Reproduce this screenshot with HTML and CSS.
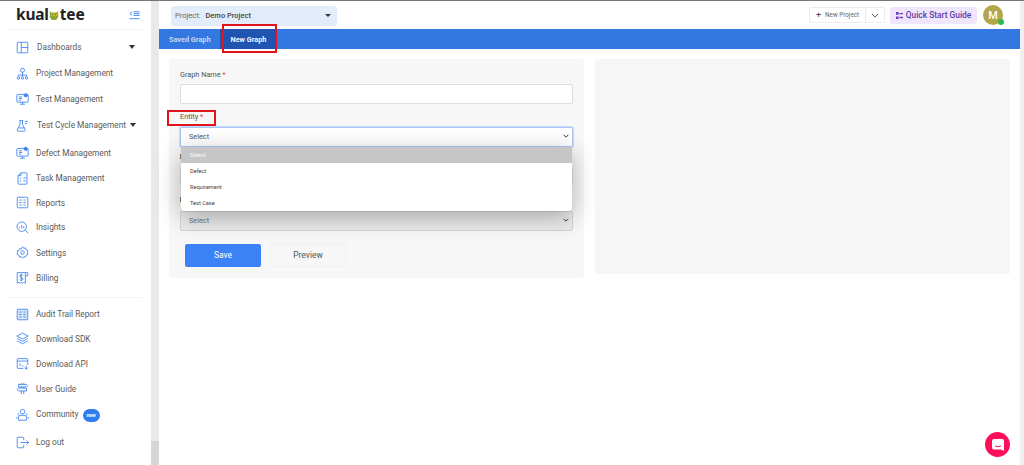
FILE: index.html
```html
<!DOCTYPE html>
<html lang="en">
<head>
<meta charset="utf-8">
<title>New Graph</title>
<link rel="stylesheet" href="styles.css">
</head>
<body>
<div class="app">
  <aside class="sidebar">
    <div class="brand">
      <div class="logo">kual<svg class="owl" viewBox="0 0 12 12" width="10" height="11"><path d="M1 1l2 1.500h6L11 1v7l-2.500 3.500h-5L1 8z" fill="#8fa32c"/><circle cx="4" cy="5" r="1.800" fill="#e9c92f"/><circle cx="8" cy="5" r="1.800" fill="#e9c92f"/><circle cx="4" cy="5" r=".7" fill="#333"/><circle cx="8" cy="5" r=".7" fill="#333"/></svg>tee</div>
      <svg class="collapse" viewBox="0 0 12 10" width="11" height="10"><path d="M3.500 1.500L1 3.500l2.500 2M5 1.500h6.500M5 3.500h6.500M5 5.500h6.500M.5 9h11" fill="none" stroke="#3d84f0" stroke-width="1"/></svg>
    </div>
    <nav class="nav nav-main">
      <a class="item item-dash"><svg class="ico" viewBox="0 0 16 16"><rect x="1.500" y="1.500" width="13" height="13" rx="1"/><path d="M6.500 1.500v13M6.500 8h8"/></svg>Dashboards<span class="caret caret-far"></span></a>
      <a class="item item-pm"><svg class="ico" viewBox="0 0 16 16"><circle cx="8" cy="4" r="2.500"/><path d="M8 6.500V10M3 12v-2h10v2M8 10v2"/><circle cx="3" cy="13.500" r="1.500"/><circle cx="8" cy="13.500" r="1.500"/><circle cx="13" cy="13.500" r="1.500"/></svg>Project Management</a>
      <a class="item item-tm"><svg class="ico" viewBox="0 0 16 16"><rect x="1" y="3" width="14" height="9.500" rx="1"/><path d="M8 12.500V15M5 15h6M3.500 6h4M3.500 8h4M3.500 10h3"/><circle cx="12" cy="4" r="2" fill="#3d84f0"/></svg>Test Management</a>
      <a class="item item-tc"><svg class="ico" viewBox="0 0 16 16"><path d="M4 2h5M5 2v5l-3.500 6.500q-.5 1.500 1 1.500h8q1.500 0 1-1.500L8 7V2M3.500 11h7M11 3h3.500M11 5.500h2.500"/></svg>Test Cycle Management<span class="caret caret-near"></span></a>
      <a class="item item-dm"><svg class="ico" viewBox="0 0 16 16"><rect x="1" y="3" width="14" height="9.500" rx="1"/><path d="M8 12.500V15M5 15h6M3.500 6h4M3.500 8h4M3.500 10h3"/><circle cx="12" cy="3.500" r="2" fill="#3d84f0"/></svg>Defect Management</a>
      <a class="item item-task"><svg class="ico" viewBox="0 0 16 16"><path d="M6 1h6.500a1 1 0 011 1v12a1 1 0 01-1 1h-9a1 1 0 01-1-1V4.500zM6 1v3.500H2.500M9 7.500h3M9 11h3"/><path d="M4.500 7.500h2M4.500 11h2"/></svg>Task Management</a>
      <a class="item item-rep"><svg class="ico" viewBox="0 0 16 16"><rect x="1.500" y="1.500" width="13" height="13" rx="1"/><path d="M4 5h3M9 5h3M4 8h3M9 8h3M4 11h3M9 11h3"/></svg>Reports</a>
      <a class="item item-ins"><svg class="ico" viewBox="0 0 16 16"><circle cx="7" cy="7" r="5.800"/><path d="M11.500 11.500L15 15M4.500 9V7.500M7 9V5M9.500 9V6.500"/></svg>Insights</a>
      <a class="item item-set"><svg class="ico" viewBox="0 0 16 16"><path d="M8 1l1.500 1.800 2.300-.4.700 2.200 2.200 1-.7 2.400.7 2.400-2.200 1-.7 2.200-2.300-.4L8 15l-1.500-1.800-2.300.4-.7-2.200-2.200-1 .7-2.400L1.300 6l2.200-.4.700-2.200 2.300.4z"/><circle cx="8" cy="8" r="2.200"/></svg>Settings</a>
      <a class="item item-bill"><svg class="ico" viewBox="0 0 16 16"><path d="M1.500 2h10v13l-2-1-1.500 1-1.500-1-1.500 1-1.500-1-2 1zM11.500 2h3v4h-3M8.500 5.500Q8 4.500 6.500 4.500 4.500 4.500 4.800 6.200T6.500 8q1.900.3 1.900 1.900T6.500 11.500q-1.500 0-2-1M6.500 3.500v9"/></svg>Billing</a>
    </nav>
    <nav class="nav nav-foot">
      <a class="item item-aud"><svg class="ico" viewBox="0 0 16 16"><rect x="1.500" y="1.500" width="13" height="13" rx="1" fill="#dbe8fc"/><path d="M4 5h3M9 5h3M4 8h3M9 8h3M4 11h3M9 11h3"/></svg>Audit Trail Report</a>
      <a class="item item-sdk"><svg class="ico" viewBox="0 0 16 16"><path d="M8 1.500L15 5l-7 3.500L1 5zM1.500 8L8 11.500 14.500 8M1.500 11L8 14.500 14.500 11"/></svg>Download SDK</a>
      <a class="item item-api"><svg class="ico" viewBox="0 0 16 16"><path d="M9 14H2.500a1 1 0 01-1-1V3a1 1 0 011-1h11a1 1 0 011 1v7M1.500 5h13M4 8l2 1.500L4 11M7 11h2M12.500 10.500V15M10.500 13l2 2 2-2"/></svg>Download API</a>
      <a class="item item-guide"><svg class="ico" viewBox="0 0 16 16"><path d="M3 3h10l1.500 1.500L13 6H3zM3 7.500h10v3.500H3L1.500 9.200zM6.500 1v2M9.500 1v2M6.500 6v1.500M9.500 6v1.500M6.500 11v4M9.500 11v4"/></svg>User Guide</a>
      <a class="item item-com"><svg class="ico" viewBox="0 0 16 16"><circle cx="8" cy="4.500" r="2.800"/><path d="M3 15v-3q0-3 3-3h4q3 0 3 3v3zM3.500 6.500a2 2 0 000 3M12.500 6.500a2 2 0 010 3M1 13v-2M15 13v-2"/></svg>Community<span class="badge">new</span></a>
      <a class="item item-out"><svg class="ico" viewBox="0 0 16 16"><path d="M9.500 5V2.500a1 1 0 00-1-1h-6a1 1 0 00-1 1v11a1 1 0 001 1h6a1 1 0 001-1V11M5.500 8h10M13 5.500L15.500 8 13 10.500"/></svg>Log out</a>
    </nav>
  </aside>
  <div class="rail"><span class="rail-thumb"></span></div>
  <main class="main">
    <header class="topbar">
      <div class="project"><span class="project-key">Project:</span><span class="project-name">Demo Project</span><span class="caret caret-small"></span></div>
      <div class="top-actions">
        <div class="split"><span class="split-main"><span class="plus">+</span>New Project</span><span class="split-arrow"><svg viewBox="0 0 10 6" width="8" height="5"><path d="M1 1l4 4 4-4" fill="none" stroke="#555" stroke-width="1.200"/></svg></span></div>
        <div class="guide"><svg viewBox="0 0 8 8" width="7" height="7"><path d="M0 0h3v3H0zM0 5h3v3H0zM4 1h4v1.500H4zM4 5.500h4V7H4z" fill="#6b3fb5"/></svg>Quick Start Guide</div>
        <div class="avatar">M<span class="status"></span></div>
      </div>
    </header>
    <div class="tabs">
      <span class="tab">Saved Graph</span>
      <span class="tab tab-active">New Graph</span>
    </div>
    <section class="content">
      <form class="card card-form">
        <label class="label">Graph Name <em>*</em></label>
        <div class="control control-name"></div>
        <label class="label label-entity">Entity <em>*</em></label>
        <div class="control control-focus">Select<svg class="chev" viewBox="0 0 10 6"><path d="M1 1l4 4 4-4" fill="none" stroke="#333" stroke-width="1.600"/></svg></div>
        <span class="label-stub label-hidden"></span>
        <div class="control control-hidden"></div>
        <span class="label-stub label-hidden2"></span>
        <div class="control control-last">Select<svg class="chev" viewBox="0 0 10 6"><path d="M1 1l4 4 4-4" fill="none" stroke="#333" stroke-width="1.600"/></svg></div>
        <div class="buttons">
          <span class="btn btn-save">Save</span>
          <span class="btn btn-preview">Preview</span>
        </div>
      </form>
      <div class="card card-side"></div>
    </section>
  </main>
  <div class="rail-right"></div>
</div>
<div class="menu">
  <div class="opt opt-on">Select</div>
  <div class="opt">Defect</div>
  <div class="opt">Requirement</div>
  <div class="opt">Test Case</div>
</div>
<span class="mark mark-tab"></span>
<span class="mark mark-entity"></span>
<span class="chat"><svg viewBox="0 0 12 12" width="12" height="12"><path d="M2 0h8a2 2 0 012 2v10l-3-1.500H2a2 2 0 01-2-2V2a2 2 0 012-2z" fill="#fff"/><path d="M3 7q3 1.500 6 0" fill="none" stroke="#ff0f5a"/></svg></span>
</body>
</html>
```
FILE: styles.css
```css
* { box-sizing: border-box; }
html, body { margin: 0; height: 465px; overflow: hidden; }
body { font-family: Roboto, "Liberation Sans", sans-serif; color: #555; background: #fff; position: relative; }
.app { display: flex; height: 465px; border-top: 1px solid #777; }

.sidebar { width: 151px; flex: none; padding: 0 8px; background: #fff; }
.brand { height: 29px; display: flex; align-items: center; justify-content: space-between; padding: 0 3px 0 8px; border-bottom: 1px solid #f3f3f3; }
.logo { font: 700 15.500px/1 "Noto Sans", sans-serif; color: #222; display: flex; align-items: center; letter-spacing: -.2px; }
.owl { margin: 0 .5px; }
.nav { display: flex; flex-direction: column; }
.nav-main { border-bottom: 1px solid #f3f3f3; padding-bottom: 7px; }
.item { display: flex; align-items: center; font-size: 8.300px; line-height: 12px; color: #5a5a5a; height: 25px; white-space: nowrap; position: relative; padding-left: 8px; }
.ico { width: 13px; height: 13px; margin-right: 7px; flex: none; fill: none; stroke: #2f7bf0; stroke-width: 1; }
.item-dash { margin-top: 5px; height: 24px; }
.item-dash .ico { margin-right: 8px; }
.item-pm { height: 28px; }
.item-tm { height: 23px; }
.item-tc { height: 30px; }
.item-tc .ico { margin-right: 8px; }
.item-dm { height: 25px; }
.item-task { height: 26px; }
.item-rep { height: 23px; }
.item-ins { height: 26px; }
.item-set, .item-bill { height: 25px; }
.nav-foot { padding-top: 4px; }
.item-aud { height: 24px; }
.item-com { height: 26px; }
.item-out { height: 30px; }
.caret { display: inline-block; width: 0; height: 0; border-left: 3.500px solid transparent; border-right: 3.500px solid transparent; border-top: 4px solid #333; flex: none; }
.caret-far { margin-left: 48px; }
.caret-near { margin-left: 4px; }
.caret-small { border-left-width: 3px; border-right-width: 3px; border-top-width: 3px; }
.badge { display: inline-block; width: 17px; height: 13px; border-radius: 8px; background: #2f7bf0; color: #fff; font-size: 5px; font-weight: 700; line-height: 13px; text-align: center; margin-left: 4px; margin-top: 2px; }

.rail { width: 8px; flex: none; background: #e9e9e9; position: relative; }
.rail-thumb { position: absolute; left: 0; right: 0; top: 440px; height: 24px; background: #d6d6d6; }
.rail-right { width: 4px; flex: none; background: #f0f0f0; }
.main { flex: 1; min-width: 0; display: flex; flex-direction: column; }

.topbar { height: 28px; display: flex; align-items: center; justify-content: space-between; padding: 0 0 0 12px; }
.project { width: 166px; height: 20px; background: #e3ecfb; border-radius: 3px; display: flex; align-items: center; padding: 0 6px 0 4px; font-size: 7.500px; margin-top: 1px; }
.project-key { color: #666; margin-right: 5px; }
.project-name { color: #444; font-weight: 500; flex: 1; }
.top-actions { display: flex; align-items: center; padding-right: 17px; }
.split { display: flex; height: 16px; width: 76px; border: 1px solid #ececec; border-radius: 2px; font-size: 6.300px; color: #666; margin-right: 5px; align-items: center; }
.split-main { display: flex; align-items: center; width: 57px; height: 100%; padding-left: 6px; border-right: 1px solid #ececec; }
.plus { font-size: 9px; color: #444; margin-right: 4px; }
.split-arrow { width: 18px; display: flex; justify-content: center; }
.guide { display: flex; align-items: center; gap: 3px; width: 87px; height: 17px; justify-content: center; background: #efe6fb; border-radius: 3px; color: #5f39a8; font-size: 8.400px; font-weight: 500; margin-right: 6px; }
.avatar { width: 20px; height: 20px; border-radius: 50%; background: #b3a64a; color: #fff; font-size: 11px; font-weight: 500; display: flex; align-items: center; justify-content: center; position: relative; }
.status { position: absolute; right: -1px; bottom: 0; width: 6px; height: 6px; border-radius: 50%; background: #2cb84f; }

.tabs { height: 20px; background: #3377e0; display: flex; align-items: stretch; }
.tab { display: flex; align-items: center; padding: 0 10px; font-size: 7.300px; font-weight: 700; color: #c4d8f8; white-space: nowrap; }
.tab-active { background: #1f55b0; color: #eef4ff; width: 55px; padding: 0 0 0 10px; }

.content { display: grid; grid-template-columns: 1fr 1fr; gap: 11px; padding: 10px 10px 0; align-items: start; }
.card { min-width: 0; background: #f7f7f7; border-radius: 2px; }
.card-form { height: 219px; padding: 11px 11px 0; position: relative; }
.card-side { height: 215px; background: #f6f6f6; }
.label { display: block; font-size: 7.300px; line-height: 10px; color: #555; }
.label em { color: #e03b3b; font-style: normal; }
.label-stub { display: block; height: 10px; padding-top: 2px; }
.label-stub::before { content: ""; display: block; width: 1px; height: 5px; background: #8a7a60; }
.control { height: 20px; background: #fff; border: 1px solid #ddd; border-radius: 2px; font-size: 7.300px; color: #555; display: flex; align-items: center; justify-content: space-between; padding: 0 3px 2px 8px; }
.control-name { margin-top: 4px; }
.label-entity { margin-top: 8px; }
.control-focus { margin-top: 5px; border: 1px solid #a9c8f5; box-shadow: 0 0 0 1px #c8dcfa; }
.label-hidden { margin-top: 5px; }
.control-hidden { margin-top: 4px; }
.label-hidden2 { margin-top: 9px; }
.control-last { margin-top: 6px; background: #ececec; color: #777; border-color: #d5d5d5; }
.chev { width: 6px; height: 4px; }
.buttons { display: flex; gap: 9px; margin: 13px 0 0 5px; }
.btn { width: 76px; height: 23px; display: flex; align-items: center; justify-content: center; font-size: 8.500px; border-radius: 2px; padding-bottom: 2px; }
.btn-save { background: #3b82f6; color: #fff; }
.btn-preview { color: #555; background: #f7f7f7; border: 1px solid #f0f0f0; }

.menu { position: absolute; left: 181px; top: 147px; width: 391px; height: 64px; background: #fff; border-radius: 0 0 4px 4px; box-shadow: 0 6px 24px rgba(0,0,0,.3); overflow: hidden; }
.opt { height: 16px; padding-left: 9px; font-size: 5.600px; line-height: 16px; color: #444; }
.opt-on { background: #c6c6c6; color: #f4f4f4; font-weight: 500; }
.mark { position: absolute; border: 2px solid #e0141c; }
.mark-tab { left: 222px; top: 24px; width: 55px; height: 29px; }
.mark-entity { left: 167px; top: 110px; width: 49px; height: 16px; }
.chat { position: absolute; left: 985px; top: 432px; width: 25px; height: 25px; border-radius: 50%; background: #ff0f5a; display: flex; align-items: center; justify-content: center; }
```
